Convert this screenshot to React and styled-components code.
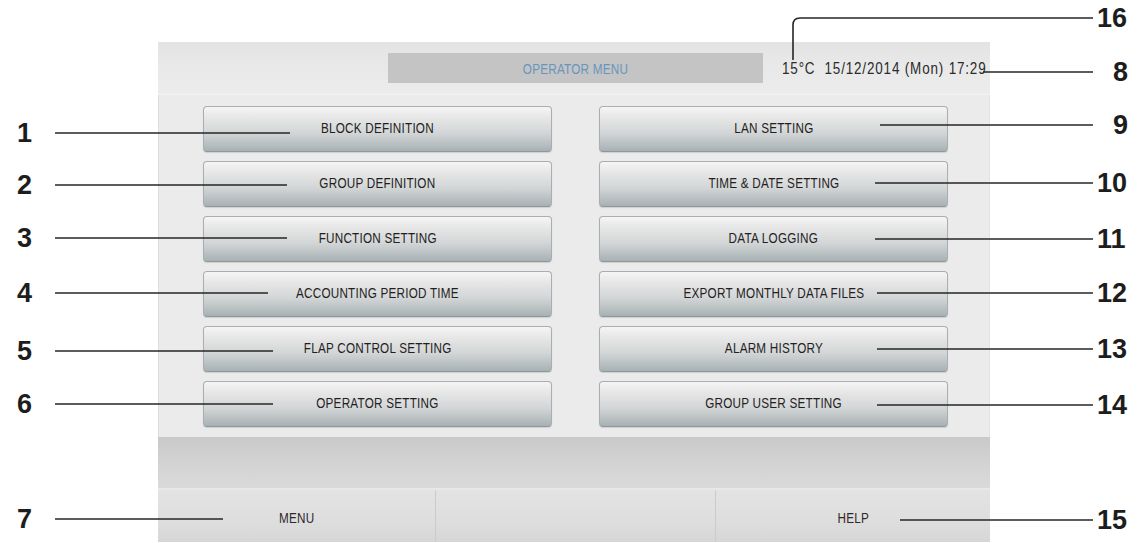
import React from 'react'
import styled, { createGlobalStyle } from 'styled-components'

const GlobalStyle = createGlobalStyle`
   html, body {
      margin: 0;
      padding: 0;
      background: #ffffff;
   }
   body {
      width: 1143px;
      height: 543px;
      overflow: hidden;
      font-family: "Liberation Sans", Arial, sans-serif;
   }
`

const leftItems = [
   'BLOCK DEFINITION',
   'GROUP DEFINITION',
   'FUNCTION SETTING',
   'ACCOUNTING PERIOD TIME',
   'FLAP CONTROL SETTING',
   'OPERATOR SETTING',
]

const rightItems = [
   'LAN SETTING',
   'TIME & DATE SETTING',
   'DATA LOGGING',
   'EXPORT MONTHLY DATA FILES',
   'ALARM HISTORY',
   'GROUP USER SETTING',
]

// callout leaders: [label, label x, y, line from x, line to x]
const callouts = [
   ['1', 17, 133, 55, 290],
   ['2', 17, 185, 55, 287],
   ['3', 17, 238, 55, 287],
   ['4', 17, 293, 55, 268],
   ['5', 17, 351, 55, 273],
   ['6', 17, 404, 55, 273],
   ['7', 17, 519, 55, 223],
   ['8', 1113, 72, 983, 1093],
   ['9', 1113, 125, 880, 1093],
   ['10', 1097, 183, 875, 1093],
   ['11', 1097, 239, 875, 1093],
   ['12', 1097, 293, 877, 1093],
   ['13', 1097, 349, 877, 1093],
   ['14', 1097, 405, 877, 1093],
   ['15', 1097, 520, 900, 1093],
]

function App() {
   return (
      <>
         <GlobalStyle />
         <Figure>
            <Panel>
               <Header>
                  <TitleBox>
                     <Caption>OPERATOR MENU</Caption>
                  </TitleBox>
                  <DateTime>15°C&nbsp;&nbsp;15/12/2014 (Mon) 17:29</DateTime>
               </Header>
               <Body>
                  {leftItems.map((item) => (
                     <MenuButton key={item}>
                        <Caption>{item}</Caption>
                     </MenuButton>
                  ))}
                  {rightItems.map((item) => (
                     <MenuButton key={item}>
                        <Caption>{item}</Caption>
                     </MenuButton>
                  ))}
               </Body>
               <Band />
               <BottomBar>
                  <BarCell>
                     <Caption>MENU</Caption>
                  </BarCell>
                  <BarCell />
                  <BarCell>
                     <Caption>HELP</Caption>
                  </BarCell>
               </BottomBar>
            </Panel>

            <Leaders width="1143" height="543" viewBox="0 0 1143 543">
               {callouts.map(([label, , y, x1, x2]) => (
                  <line key={label} x1={x1} y1={y} x2={x2} y2={y} />
               ))}
               <path d="M793 60 V25 Q793 18 800 18 H1093" fill="none" />
            </Leaders>
            {callouts.map(([label, x, y]) => (
               <Label key={label} $x={x} $y={y}>
                  {label}
               </Label>
            ))}
            <Label $x={1097} $y={18}>16</Label>
         </Figure>
      </>
   )
}

export default App

const Figure = styled.div`
   position: relative;
   width: 1143px;
   height: 543px;
   padding: 42px 0 0 158px;
   box-sizing: border-box;
`
const Panel = styled.div`
   width: 832px;
   height: 500px;
   display: flex;
   flex-direction: column;
   background: #ebebeb;
   box-shadow: inset 1px 0 0 #dcdcdc, inset -1px 0 0 #e2e2e2;
`
const Header = styled.div`
   height: 53px;
   flex: none;
   display: flex;
   align-items: center;
   padding-left: 230px;
   background: linear-gradient(#e3e3e3, #e8e8e8 40%, #ececec);
   border-bottom: 1px solid #f3f3f3;
   box-sizing: border-box;
`
const TitleBox = styled.div`
   flex: none;
   width: 375px;
   height: 30px;
   display: flex;
   align-items: center;
   justify-content: center;
   background: #c4c4c4;
   color: #6796bd;
`
// the panel's lettering is a tall, condensed face
const Caption = styled.span`
   display: inline-block;
   font-family: "Liberation Sans", Arial, sans-serif;
   font-size: 15px;
   letter-spacing: 0.3px;
   white-space: nowrap;
   transform: scaleX(0.78);
`
const DateTime = styled.div`
   flex: none;
   margin-left: 19px;
   padding-top: 2px;
   color: #2b2b2b;
   font-size: 16px;
   letter-spacing: 1px;
   white-space: nowrap;
   transform: scaleX(0.84);
   transform-origin: left center;
`
const Body = styled.div`
   height: 342px;
   flex: none;
   box-sizing: border-box;
   padding: 11px 0 0 45px;
   display: grid;
   grid-auto-flow: column;
   grid-template-columns: repeat(2, 349px);
   grid-template-rows: repeat(6, 46px);
   column-gap: 47px;
   row-gap: 9px;
`
const MenuButton = styled.div`
   display: flex;
   align-items: center;
   justify-content: center;
   padding-bottom: 3px;
   box-sizing: border-box;
   border: 1px solid #a9afb1;
   border-bottom-color: #8e989b;
   border-radius: 4px;
   background: linear-gradient(#f5f5f5 0%, #e6e6e6 25%, #d2d5d6 60%, #a7b1b4 100%);
   box-shadow: 0 1px 1px rgba(0, 0, 0, 0.12);
   color: #241e1e;
`
const Band = styled.div`
   height: 53px;
   flex: none;
   background: linear-gradient(#c9c9c9, #d2d2d2 45%, #dadada);
   border-bottom: 2px solid #e8e8e8;
   box-sizing: border-box;
`
const BottomBar = styled.div`
   flex: 1;
   display: grid;
   grid-template-columns: 277px 280px 275px;
   background: linear-gradient(#e3e3e3, #dedede 60%, #d6d6d6);
`
const BarCell = styled.div`
   display: flex;
   align-items: center;
   justify-content: center;
   padding-top: 2px;
   color: #2e2828;
   & + & {
      border-left: 1px solid #cbcbcb;
   }
`
const Leaders = styled.svg`
   position: absolute;
   inset: 0;
   pointer-events: none;
   line, path {
      stroke: #262626;
      stroke-width: 1.6;
   }
`
const Label = styled.div`
   position: absolute;
   left: ${({ $x }) => $x}px;
   top: ${({ $y }) => $y}px;
   transform: translateY(-50%);
   font-family: "Liberation Sans", Arial, sans-serif;
   font-weight: 700;
   font-size: 27px;
   line-height: 1;
   color: #1d1d1d;
`
